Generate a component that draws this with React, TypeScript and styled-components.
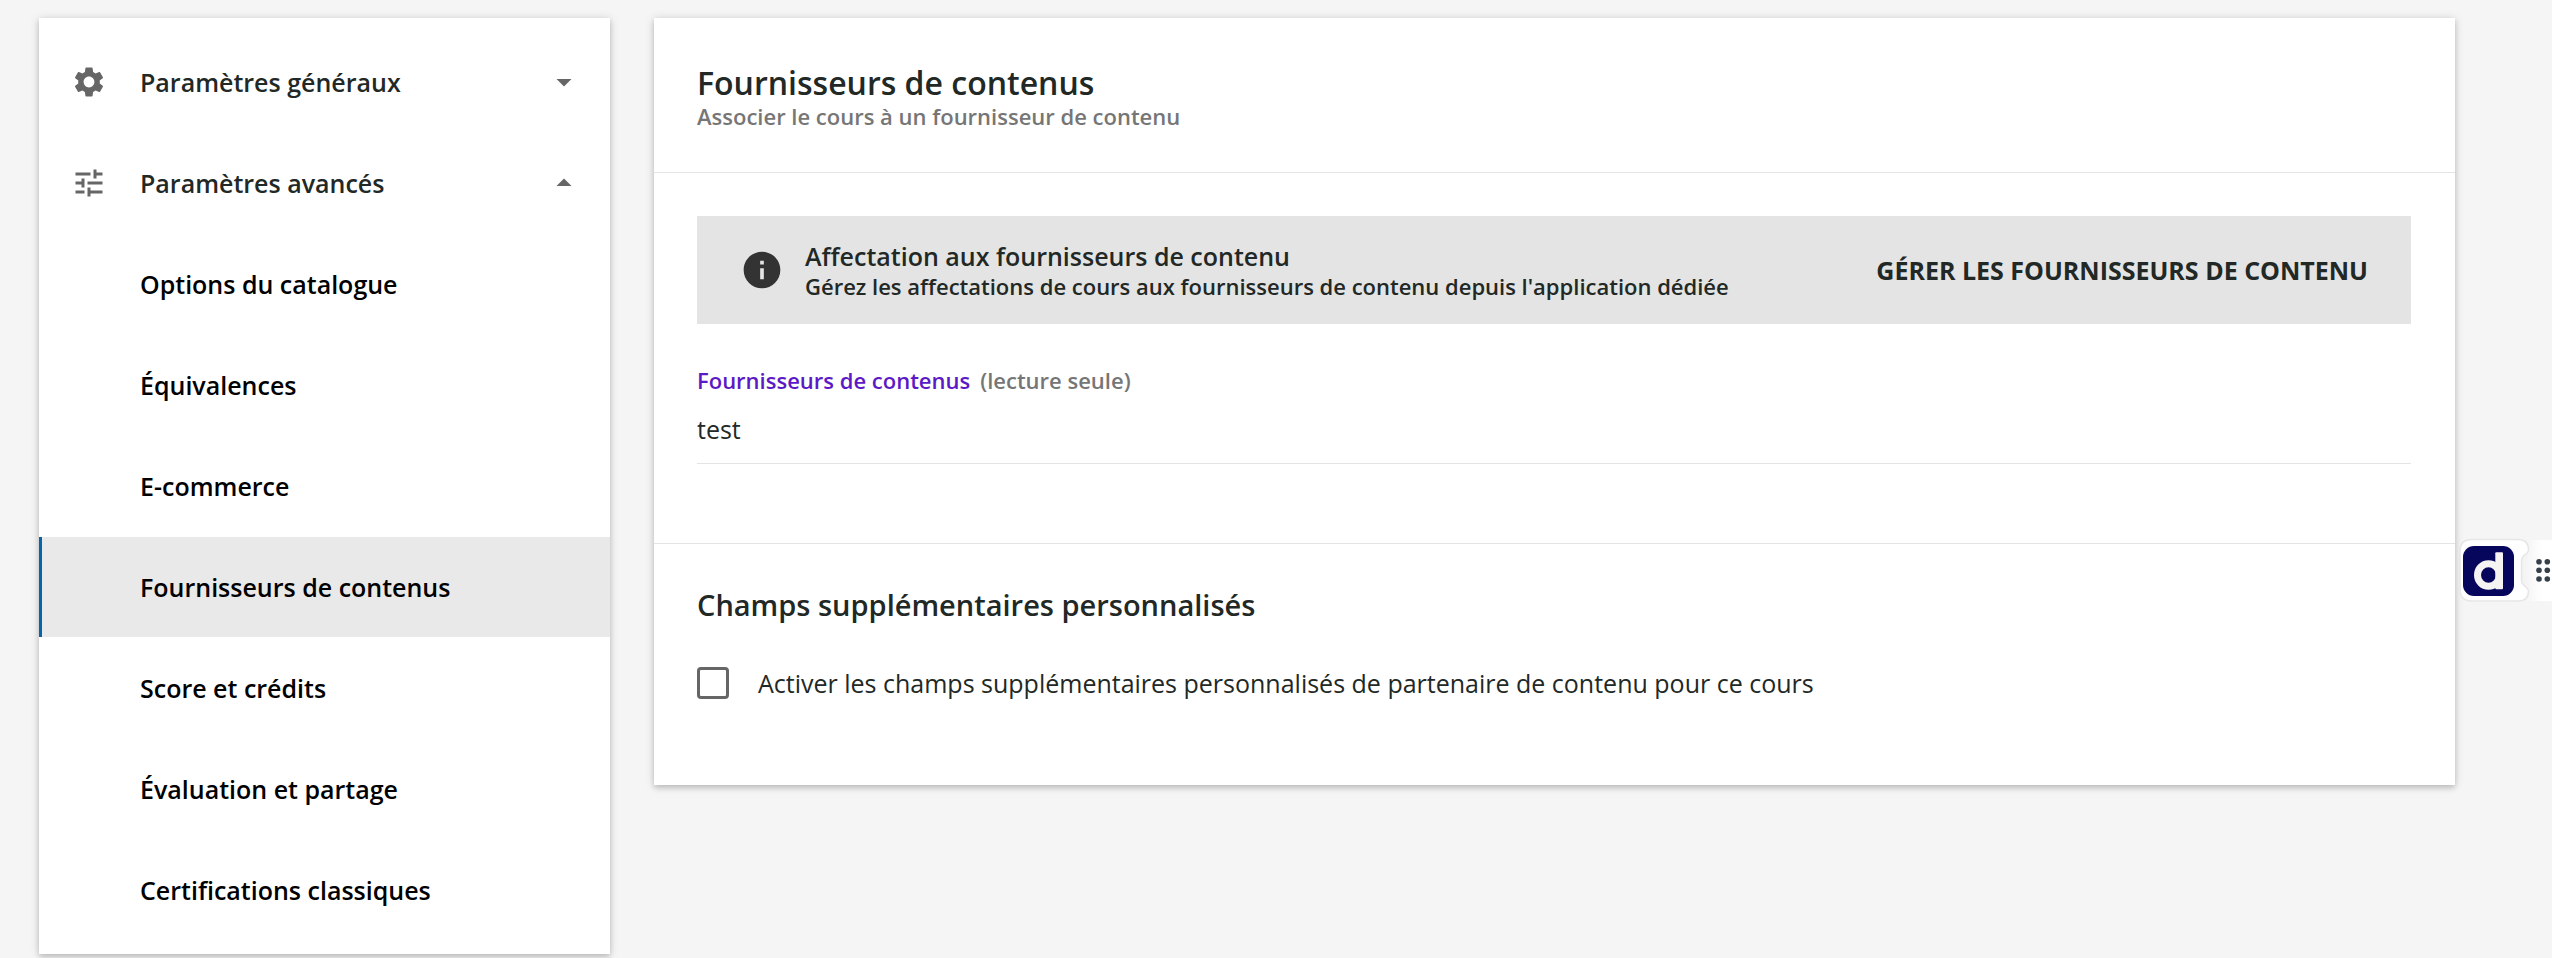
import React, { useState } from "react";
import styled, { createGlobalStyle } from "styled-components";
import { MdArrowDropDown, MdArrowDropUp, MdInfo, MdSettings, MdTune } from "react-icons/md";

const GlobalStyle = createGlobalStyle`
  * { box-sizing: border-box; }
  body {
    margin: 0;
    background: #f5f5f5;
    color: #222825;
    font-family: "Open Sans", sans-serif;
    font-size: 25px;
    line-height: 36px;
  }
  button, input { font: inherit; color: inherit; }
`;

const Page = styled.div`
  display: flex;
  align-items: flex-start;
  gap: 44px;
  min-height: 100vh;
  padding: 18px 97px 0 39px;
`;

const shadow = "0 1px 9px rgba(0, 0, 0, 0.16), 0 3px 5px rgba(0, 0, 0, 0.14)";

const Sidebar = styled.nav`
  flex: 0 0 571px;
  display: flex;
  flex-direction: column;
  gap: 1px;
  padding: 14px 0;
  background: #fff;
  box-shadow: ${shadow};
`;

const GroupButton = styled.button`
  display: flex;
  align-items: center;
  gap: 33px;
  height: 100px;
  padding: 0 28px 0 32px;
  border: 0;
  background: none;
  font-weight: 600;
  text-align: left;
  cursor: pointer;

  svg { flex: none; color: #666; }
`;

const GroupLabel = styled.span`
  flex: 1;
`;

const NavLink = styled.a<{ $active?: boolean }>`
  display: flex;
  align-items: center;
  height: 100px;
  padding-left: 98px;
  border-left: 3px solid ${(p) => (p.$active ? "#0465ac" : "transparent")};
  background: ${(p) => (p.$active ? "#e9e9e9" : "transparent")};
  color: #000;
  font-weight: 600;
  text-decoration: none;
`;

const Card = styled.main`
  flex: 1;
  min-width: 0;
  background: #fff;
  box-shadow: ${shadow};
`;

const CardHeader = styled.header`
  padding: 46px 44px 42px 43px;
`;

const Title = styled.h1`
  margin: 0;
  font-size: 32px;
  line-height: 38px;
  font-weight: 600;
`;

const Subtitle = styled.p`
  margin: 0;
  color: #767676;
  font-size: 22px;
  line-height: 28px;
  font-weight: 600;
`;

const Section = styled.section`
  padding: 43px 44px 79px 43px;
  border-top: 1px solid #e4e4e4;

  &:last-child { padding-bottom: 84px; }
`;

const Banner = styled.div`
  display: flex;
  align-items: center;
  height: 108px;
  padding: 0 43px;
  background: #e4e4e4;

  svg { flex: none; color: #333; }
`;

const BannerText = styled.div`
  flex: 1;
  margin-left: 21px;
  font-weight: 600;
`;

const BannerTitle = styled.div`
  line-height: 32px;
`;

const BannerDetail = styled.div`
  font-size: 22px;
  line-height: 28px;
`;

const BannerButton = styled.button`
  padding: 0;
  border: 0;
  background: none;
  font-weight: 700;
  text-transform: uppercase;
  cursor: pointer;
`;

const Field = styled.div`
  display: flex;
  flex-direction: column;
  padding-top: 40px;
`;

const FieldLabel = styled.label`
  color: #5c19c5;
  font-size: 22px;
  line-height: 32px;
  font-weight: 600;
`;

const FieldHint = styled.span`
  margin-left: 10px;
  color: #767676;
`;

const FieldInput = styled.input`
  height: 68px;
  padding: 0 0 2px;
  border: 0;
  border-bottom: 1px solid #e4e4e4;
  outline: 0;
  background: none;
`;

const SectionTitle = styled.h2`
  margin: 0 0 42px;
  font-size: 29px;
  line-height: 36px;
  font-weight: 600;
`;

const CheckRow = styled.label`
  display: flex;
  align-items: center;
  gap: 29px;
`;

const Checkbox = styled.input`
  appearance: none;
  width: 32px;
  height: 32px;
  margin: 0;
  border: 3px solid #666;
  border-radius: 4px;
  background: #fff;

  &:checked { background: #666; }
`;

const FloatingWidget = styled.button`
  position: fixed;
  top: 537px;
  right: 0;
  padding: 0;
  border: 0;
  background: none;
  line-height: 0;
  cursor: pointer;
`;

const links = [
  "Options du catalogue",
  "Équivalences",
  "E-commerce",
  "Fournisseurs de contenus",
  "Score et crédits",
  "Évaluation et partage",
  "Certifications classiques",
];

const dotXs = [82, 90.3];
const dotYs = [24.7, 33.3, 42];

function WidgetArt() {
  return (
    <svg width="95" height="67" viewBox="0 0 95 67" aria-hidden="true">
      <defs>
        <linearGradient id="handle" x1="0" x2="1">
          <stop offset="0" stopColor="#f0f0f0" />
          <stop offset="0.7" stopColor="#fff" />
        </linearGradient>
      </defs>
      <rect x="62" y="3" width="33" height="61" fill="url(#handle)" />
      <path
        d="M15 2.5H61Q71.5 2.5 71.5 13C71.5 18 64.5 17 64.5 24V43C64.5 50 71.5 49 71.5 54Q71.5 64 61 64H15Q3 64 3 52V14.5Q3 2.5 15 2.5Z"
        fill="#fff"
        stroke="#e6e6e6"
        strokeWidth="1.5"
      />
      <rect x="6" y="9" width="51" height="50" rx="11" fill="#06065d" />
      <ellipse cx="31.5" cy="38" rx="11" ry="11.3" fill="none" stroke="#f5f4f2" strokeWidth="7" />
      <rect x="38.3" y="15.3" width="7.7" height="37" rx="1" fill="#f5f4f2" />
      {dotXs.map((x) => dotYs.map((y) => <circle key={`${x}-${y}`} cx={x} cy={y} r="2.8" fill="#36404a" />))}
    </svg>
  );
}

export default function App() {
  const [active, setActive] = useState("Fournisseurs de contenus");
  const [open, setOpen] = useState(true);
  return (
    <>
      <GlobalStyle />
      <Page>
        <Sidebar>
          <GroupButton type="button">
            <MdSettings size={36} />
            <GroupLabel>Paramètres généraux</GroupLabel>
            <MdArrowDropDown size={36} />
          </GroupButton>
          <GroupButton type="button" aria-expanded={open} onClick={() => setOpen(!open)}>
            <MdTune size={36} />
            <GroupLabel>Paramètres avancés</GroupLabel>
            {open ? <MdArrowDropUp size={36} /> : <MdArrowDropDown size={36} />}
          </GroupButton>
          {open &&
            links.map((name) => (
              <NavLink key={name} href="#" $active={name === active} onClick={() => setActive(name)}>
                {name}
              </NavLink>
            ))}
        </Sidebar>
        <Card>
          <CardHeader>
            <Title>Fournisseurs de contenus</Title>
            <Subtitle>Associer le cours à un fournisseur de contenu</Subtitle>
          </CardHeader>
          <Section>
            <Banner>
              <MdInfo size={44} />
              <BannerText>
                <BannerTitle>Affectation aux fournisseurs de contenu</BannerTitle>
                <BannerDetail>
                  Gérez les affectations de cours aux fournisseurs de contenu depuis l'application dédiée
                </BannerDetail>
              </BannerText>
              <BannerButton type="button">Gérer les fournisseurs de contenu</BannerButton>
            </Banner>
            <Field>
              <FieldLabel htmlFor="providers">
                Fournisseurs de contenus<FieldHint>(lecture seule)</FieldHint>
              </FieldLabel>
              <FieldInput id="providers" type="text" value="test" readOnly />
            </Field>
          </Section>
          <Section>
            <SectionTitle>Champs supplémentaires personnalisés</SectionTitle>
            <CheckRow>
              <Checkbox type="checkbox" />
              Activer les champs supplémentaires personnalisés de partenaire de contenu pour ce cours
            </CheckRow>
          </Section>
        </Card>
      </Page>
      <FloatingWidget type="button" aria-label="Ouvrir l'assistant">
        <WidgetArt />
      </FloatingWidget>
    </>
  );
}
